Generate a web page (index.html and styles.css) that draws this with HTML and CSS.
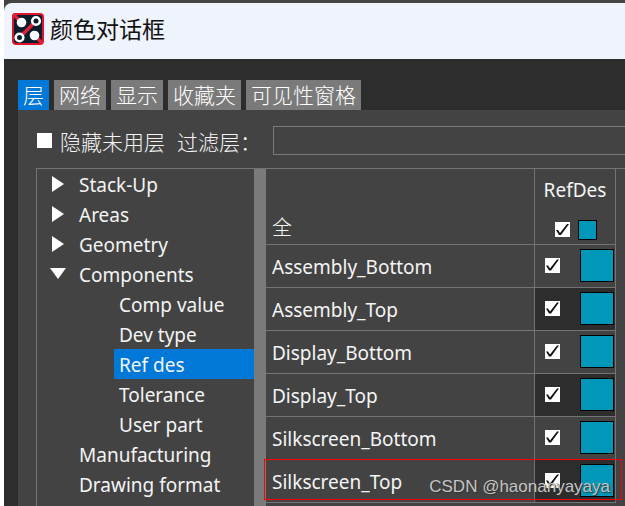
FILE: index.html
```
<!DOCTYPE html>
<html lang="zh-CN">
<head>
    <meta charset="UTF-8">
    <meta name="viewport" content="width=device-width, initial-scale=1.0">
    <title>颜色对话框</title>
    <link rel="stylesheet" href="styles.css">
</head>
<body>
    <div class="dialog">
        <header class="titlebar">
            <svg class="logo" viewBox="0 0 32 32" aria-hidden="true">
                <rect x="1" y="1" width="30" height="30" rx="3" fill="#0b1e2b" stroke="#e0142f" stroke-width="2"/>
                <path d="M1 1L10 10M22 22L30 30M8 24L24 8" stroke="#e0203a" stroke-width="3.500"/>
                <circle cx="9.500" cy="9.500" r="4.800" fill="#fff"/>
                <circle cx="22.500" cy="22.500" r="4.800" fill="#fff"/>
                <circle cx="24" cy="8" r="3.800" fill="#0b1e2b" stroke="#fff" stroke-width="2.600"/>
                <circle cx="7.500" cy="24.500" r="3.800" fill="#0b1e2b" stroke="#fff" stroke-width="2.600"/>
            </svg>
            <h1>颜色对话框</h1>
        </header>

        <main class="content">
            <nav class="tabs">
                <button class="tab active">层</button>
                <button class="tab">网络</button>
                <button class="tab">显示</button>
                <button class="tab">收藏夹</button>
                <button class="tab">可见性窗格</button>
            </nav>

            <div class="panel">
                <div class="filters">
                    <input type="checkbox" class="check" id="hide-unused">
                    <label for="hide-unused">隐藏未用层</label>
                    <label for="layer-filter" class="filter-label">过滤层：</label>
                    <input type="text" class="filter-input" id="layer-filter">
                </div>

                <div class="split">
                    <ul class="tree">
                        <li><span class="arrow"></span>Stack-Up</li>
                        <li><span class="arrow"></span>Areas</li>
                        <li><span class="arrow"></span>Geometry</li>
                        <li><span class="arrow open"></span>Components</li>
                        <li class="child"><span>Comp value</span></li>
                        <li class="child"><span>Dev type</span></li>
                        <li class="child selected"><span>Ref des</span></li>
                        <li class="child"><span>Tolerance</span></li>
                        <li class="child"><span>User part</span></li>
                        <li><span class="arrow none"></span>Manufacturing</li>
                        <li><span class="arrow none"></span>Drawing format</li>
                        <li><span class="arrow none"></span>Rigid flex</li>
                    </ul>
                    <div class="splitter"></div>
                    <div class="layers">
                        <table>
                            <thead>
                                <tr>
                                    <th class="all">全</th>
                                    <th class="colors">
                                        <span class="column-name">RefDes</span>
                                        <div class="column-tools">
                                            <input type="checkbox" class="check" aria-label="RefDes" checked>
                                            <button class="swatch small" aria-label="RefDes"></button>
                                        </div>
                                    </th>
                                </tr>
                            </thead>
                            <tbody>
                                <tr>
                                    <td>Assembly_Bottom</td>
                                    <td class="colors"><div class="cell"><input type="checkbox" class="check" aria-label="Assembly_Bottom" checked><button class="swatch" aria-label="Assembly_Bottom"></button></div></td>
                                </tr>
                                <tr>
                                    <td>Assembly_Top</td>
                                    <td class="colors"><div class="cell"><input type="checkbox" class="check" aria-label="Assembly_Top" checked><button class="swatch" aria-label="Assembly_Top"></button></div></td>
                                </tr>
                                <tr>
                                    <td>Display_Bottom</td>
                                    <td class="colors"><div class="cell"><input type="checkbox" class="check" aria-label="Display_Bottom" checked><button class="swatch" aria-label="Display_Bottom"></button></div></td>
                                </tr>
                                <tr>
                                    <td>Display_Top</td>
                                    <td class="colors"><div class="cell"><input type="checkbox" class="check" aria-label="Display_Top" checked><button class="swatch" aria-label="Display_Top"></button></div></td>
                                </tr>
                                <tr>
                                    <td>Silkscreen_Bottom</td>
                                    <td class="colors"><div class="cell"><input type="checkbox" class="check" aria-label="Silkscreen_Bottom" checked><button class="swatch" aria-label="Silkscreen_Bottom"></button></div></td>
                                </tr>
                                <tr>
                                    <td>Silkscreen_Top</td>
                                    <td class="colors"><div class="cell"><input type="checkbox" class="check" aria-label="Silkscreen_Top" checked><button class="swatch" aria-label="Silkscreen_Top"></button></div></td>
                                </tr>
                            </tbody>
                        </table>
                        <div class="highlight"></div>
                    </div>
                </div>
            </div>
        </main>
    </div>
    <div class="watermark">CSDN @haonanyayaya</div>
</body>
</html>
```
FILE: styles.css
```
* {
    box-sizing: border-box;
}
body {
    margin: 0;
    padding-left: 4px;
    height: 100vh;
    overflow: hidden;
    background: #fff;
    color: #f4f4f4;
    font: 19px "Noto Sans", "Noto Sans CJK SC", sans-serif;
}
.dialog {
    display: flex;
    flex-direction: column;
    height: 100%;
    padding-top: 3px;
    background: #444;
}
.titlebar {
    display: flex;
    align-items: center;
    gap: 6px;
    height: 56px;
    flex-shrink: 0;
    padding: 0 8px 4px;
    background: #eff3fb;
    border-radius: 8px 0 0 0;
    color: #111;
}
.logo {
    width: 32px;
    height: 32px;
}
h1 {
    margin: 0;
    padding-bottom: 2px;
    font: 23px "Noto Sans CJK SC", sans-serif;
}
.content {
    display: flex;
    flex-direction: column;
    flex: 1;
    min-height: 0;
    padding: 21px 0 0 14px;
    background: #2d2d2d;
}
.tabs {
    display: flex;
    gap: 5px;
}
.tab {
    height: 30px;
    padding: 0 5px 2px;
    border: none;
    background: #7a7a7a;
    color: #fff;
    font: 300 21px/28px "Noto Sans CJK SC", sans-serif;
}
.tab.active {
    background: #0078d7;
}
.panel {
    display: flex;
    flex-direction: column;
    flex: 1;
    min-height: 0;
    padding: 16px 0 0 18px;
    background: #434343;
}
.filters {
    display: flex;
    align-items: center;
    height: 29px;
    margin-bottom: 13px;
    padding-left: 1px;
    font: 300 21px "Noto Sans CJK SC", sans-serif;
}
.filters label {
    margin-left: 8px;
}
.filters .filter-label {
    margin-left: 12px;
    width: 84px;
}
.filter-input {
    flex: 1;
    height: 29px;
    margin-left: 12px;
    border: 1px solid #7a7a7a;
    border-right: none;
    background: #434343;
    color: #f4f4f4;
    font: inherit;
}
.check {
    appearance: none;
    width: 15px;
    height: 15px;
    margin: 0;
    flex-shrink: 0;
    background: #fff;
}
.check:checked::before {
    content: "";
    display: block;
    width: 15px;
    height: 15px;
    background: #111;
    clip-path: polygon(1px 8px, 3px 8px, 5px 11px, 12px 2px, 14px 2px, 6px 13px, 4px 13px);
}
.split {
    display: flex;
    flex: 1;
    min-height: 0;
    border-top: 1px solid #747474;
}
.tree {
    width: 218px;
    flex-shrink: 0;
    margin: 0;
    padding: 0;
    overflow: hidden;
    border-left: 1px solid #747474;
    list-style: none;
    line-height: 32px;
}
.tree li {
    display: flex;
    align-items: flex-start;
    height: 30px;
    padding-left: 13px;
}
.tree .child {
    padding-left: 77px;
}
.child span {
    flex: 1;
    height: 30px;
    padding-left: 5px;
}
.selected span {
    background: #0078d7;
}
.arrow {
    width: 16px;
    height: 16px;
    margin: 7px 13px 0 0;
    background: #fff;
    clip-path: polygon(2px 0, 14px 8px, 2px 16px);
}
.arrow.open {
    clip-path: polygon(0 2px, 16px 2px, 8px 13px);
}
.arrow.none {
    visibility: hidden;
}
.splitter {
    width: 12px;
    flex-shrink: 0;
    background: #7a7a7a;
}
.layers {
    position: relative;
    flex: 1;
    padding-right: 9px;
}
table {
    width: 100%;
    border-collapse: separate;
    border-spacing: 0;
}
th, td {
    height: 43px;
    padding: 2px 0 0 6px;
    border-right: 1px solid #747474;
    border-bottom: 1px solid #747474;
    text-align: left;
    font-weight: normal;
}
th {
    height: 76px;
}
.all {
    padding-bottom: 3px;
    vertical-align: bottom;
    font: 300 20px "Noto Sans CJK SC", sans-serif;
}
.colors {
    width: 81px;
    padding: 0;
    vertical-align: middle;
}
th.colors {
    text-align: center;
}
.column-name {
    display: block;
    line-height: 42px;
}
.column-tools {
    display: flex;
    align-items: center;
    justify-content: center;
    gap: 8px;
    height: 33px;
    padding: 4px 0 0 2px;
}
tbody tr:nth-child(even) .colors {
    background: #2d2d2d;
}
.cell {
    display: flex;
    align-items: center;
    justify-content: space-between;
    padding: 0 1px 2px 10px;
}
.swatch {
    width: 34px;
    height: 33px;
    padding: 0;
    border: 1px solid #000;
    background: #0097b8;
}
.swatch.small {
    width: 19px;
    height: 20px;
}
/* outline around the last layer */
.highlight {
    position: absolute;
    z-index: 1;
    top: 291px;
    left: -1px;
    right: 4px;
    height: 39px;
    outline: 1px solid #f00;
}
.watermark {
    position: absolute;
    z-index: 2;
    right: 15px;
    bottom: 7px;
    color: #c4c4c4;
    font: 17px/24px "Liberation Sans", sans-serif;
    text-shadow: 1px 1px 1px #333;
}
```
